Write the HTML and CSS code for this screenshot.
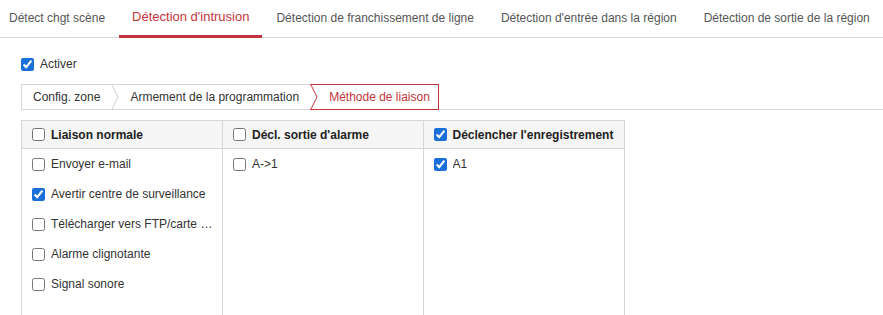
FILE: index.html
```html
<!DOCTYPE html>
<html lang="fr">

<head>
    <meta charset="UTF-8">
    <meta name="viewport" content="width=device-width, initial-scale=1.0">
    <title>Détection d'intrusion</title>
    <link rel="stylesheet" href="styles.css">
</head>

<body>
    <div class="tabs">
        <a class="tab">Détect chgt scène</a>
        <a class="tab active">Détection d'intrusion</a>
        <a class="tab">Détection de franchissement de ligne</a>
        <a class="tab">Détection d'entrée dans la région</a>
        <a class="tab">Détection de sortie de la région</a>
    </div>

    <div class="content">
        <label class="enable">
            <input type="checkbox" checked>
            <span>Activer</span>
        </label>

        <div class="steps">
            <div class="step first"><span class="step-label">Config. zone</span></div>
            <div class="step">
                <svg class="chevron" width="8" height="26" viewBox="0 0 8 26"><polyline points="0.5,0 7,13 0.5,26" fill="none" stroke="#cfcfcf" stroke-width="1"/></svg>
                <span class="step-label">Armement de la programmation</span>
            </div>
            <div class="step current">
                <svg class="chevron" width="8" height="26" viewBox="0 0 8 26"><polyline points="0.5,0 7,13 0.5,26" fill="none" stroke="#c3343c" stroke-width="1"/></svg>
                <span class="step-label">Méthode de liaison</span>
            </div>
        </div>

        <div class="link-table">
            <div class="col">
                <label class="col-head"><input type="checkbox"><span>Liaison normale</span></label>
                <div class="col-body">
                    <label class="item"><input type="checkbox"><span>Envoyer e-mail</span></label>
                    <label class="item"><input type="checkbox" checked><span>Avertir centre de surveillance</span></label>
                    <label class="item"><input type="checkbox"><span>Télécharger vers FTP/carte mémoire/NAS</span></label>
                    <label class="item"><input type="checkbox"><span>Alarme clignotante</span></label>
                    <label class="item"><input type="checkbox"><span>Signal sonore</span></label>
                </div>
            </div>
            <div class="col">
                <label class="col-head"><input type="checkbox"><span>Décl. sortie d'alarme</span></label>
                <div class="col-body">
                    <label class="item"><input type="checkbox"><span>A-&gt;1</span></label>
                </div>
            </div>
            <div class="col">
                <label class="col-head"><input type="checkbox" checked><span>Déclencher l'enregistrement</span></label>
                <div class="col-body">
                    <label class="item"><input type="checkbox" checked><span>A1</span></label>
                </div>
            </div>
        </div>
    </div>
</body>

</html>
```

FILE: styles.css
```css
* {
    margin: 0;
    padding: 0;
    box-sizing: border-box;
}

body {
    font-family: "Liberation Sans", Arial, sans-serif;
    font-size: 12px;
    color: #333;
    background-color: #fff;
    overflow: hidden;
}

input[type="checkbox"] {
    width: 13px;
    height: 13px;
    margin: 0;
    accent-color: #1a6fd8;
    flex: none;
}

/* top tabs */
.tabs {
    display: flex;
    height: 38px;
    border-bottom: 1px solid #d6d6d6;
    margin-left: -4px;
    white-space: nowrap;
}

.tab {
    padding: 0 13px 0 13px;
    margin-right: 1px;
    line-height: 36px;
    color: #555;
    cursor: pointer;
}

.tab.active {
    color: #c3343c;
    font-size: 13px;
    border-bottom: 3px solid #c3343c;
    height: 38px;
    line-height: 34px;
}

.content {
    padding: 19px 0 0 21px;
}

.enable {
    display: flex;
    align-items: center;
    gap: 6px;
    height: 14px;
    color: #333;
}

/* step bar */
.steps {
    display: flex;
    margin-top: 13px;
    height: 26px;
    border-bottom: 1px solid #d6d6d6;
}

.step {
    display: flex;
    align-items: stretch;
    height: 26px;
    border-top: 1px solid #d6d6d6;
    border-bottom: 1px solid #d6d6d6;
    margin-bottom: -1px;
    color: #333;
}

.step.first {
    border-left: 1px solid #d6d6d6;
}

.chevron {
    margin-top: -1px;
    flex: none;
}

.step-label {
    display: flex;
    align-items: center;
    padding: 0 11px 0 11px;
}

.step.current {
    color: #c3343c;
    border-top-color: #c3343c;
    border-bottom-color: #c3343c;
    border-right: 1px solid #c3343c;
}

.step.current .step-label {
    padding-right: 8px;
}

/* linkage table */
.link-table {
    display: flex;
    width: 604px;
    margin-top: 10px;
    border: 1px solid #d6d6d6;
}

.col {
    width: 201px;
    border-right: 1px solid #d6d6d6;
}

.col:last-child {
    border-right: none;
}

.col-head {
    display: flex;
    align-items: center;
    gap: 6px;
    height: 28px;
    padding: 0 10px;
    background-color: #f5f5f5;
    border-bottom: 1px solid #d6d6d6;
    font-weight: bold;
    color: #222;
}

.col-body {
    height: 200px;
}

.item {
    display: flex;
    align-items: center;
    gap: 6px;
    height: 30px;
    padding: 0 2px 0 10px;
}

.item span {
    overflow: hidden;
    white-space: nowrap;
    text-overflow: ellipsis;
}
```
